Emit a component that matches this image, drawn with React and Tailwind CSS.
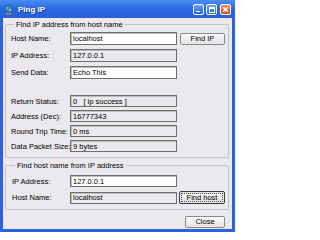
import React from "react";

const font = { fontFamily: '"Liberation Sans", Arial, sans-serif' };

function TitleButton({ kind }) {
  if (kind === "close") {
    return (
      <div className="w-[11px] h-[11px] rounded-[2px] border border-white bg-gradient-to-b from-[#f08a6a] to-[#d8431e] flex items-center justify-center">
        <svg width="7" height="7" viewBox="0 0 7 7">
          <path d="M1.2 1.2L5.8 5.8M5.8 1.2L1.2 5.8" stroke="white" strokeWidth="1.5" />
        </svg>
      </div>
    );
  }
  return (
    <div className="w-[11px] h-[11px] rounded-[2px] border border-white bg-gradient-to-b from-[#6fa0f5] to-[#2a63e0] flex items-end justify-center">
      {kind === "min" ? (
        <div className="w-[4px] h-[1.5px] bg-white mb-[2px] mr-[2px]" />
      ) : (
        <div className="w-[6px] h-[6px] border border-white border-t-2 mb-[1.5px]" />
      )}
    </div>
  );
}

function Field({ value, white, h = "h-[13px]" }) {
  return (
    <div
      className={`w-[107px] shrink-0 ${h} border border-[#6e6e6e] shadow-[inset_1px_1px_0_#bdbdbd] flex items-center pl-[2px] text-black whitespace-pre ${
        white ? "bg-white" : "bg-[#ebe9ed]"
      }`}
    >
      {value}
    </div>
  );
}

function Row({ label, children, mt, w = "w-[59px]" }) {
  return (
    <div className={`flex items-center ${mt}`}>
      <div className={`${w} shrink-0 whitespace-nowrap text-black`}>{label}</div>
      {children}
    </div>
  );
}

export default function App() {
  return (
    <div
      className="w-[235px] h-[232px] bg-[#2a63dc] flex flex-col text-[7.5px] leading-[9px]"
      style={font}
    >
      {/* title bar */}
      <div className="h-[18px] flex items-center pl-[3px] pr-[4px] bg-gradient-to-b from-[#4a8ef5] via-[#2a66df] to-[#2760d8]">
        <svg width="11" height="11" viewBox="0 0 11 11" className="mr-[4px]">
          <rect x="4.5" y="7" width="2" height="2.5" fill="#6b6b6b" />
          <rect x="2.5" y="9" width="6" height="1.5" fill="#8a8a8a" />
          <circle cx="5.5" cy="4.5" r="3.8" fill="#2f7de0" stroke="#1d4f9c" strokeWidth="0.6" />
          <path d="M3 3.2c1-.8 2-.6 2.6.2-.3 1-1.4 1.2-1.6 2.3-.6-.3-1.2-1.2-1-2.5z" fill="#6cc24a" />
          <path d="M6.4 5.2c.8-.3 1.6 0 1.9.6-.3.9-1 1.6-1.8 1.8-.2-.8-.4-1.6-.1-2.4z" fill="#f2d040" />
        </svg>
        <div className="text-white font-bold text-[8px] [text-shadow:1px_1px_0_#1a3f9a]">Ping IP</div>
        <div className="ml-auto flex gap-[2px] mt-[1px]">
          <TitleButton kind="min" />
          <TitleButton kind="max" />
          <div className="ml-[1px]">
            <TitleButton kind="close" />
          </div>
        </div>
      </div>

      {/* body */}
      <div className="flex-1 mx-[3px] mb-[3px] bg-[#ebe9ed] flex flex-col pt-[2px] px-[2px]">
        <fieldset className="border border-[#c6c4c8] rounded-[2px] w-[224px] pl-[5px] pr-[3px] pb-[5px]">
          <legend className="ml-[3px] px-[2px] text-black">Find IP address from host name</legend>
          <div className="flex flex-col pt-[3px]">
            <Row label="Host Name:">
              <Field value="localhost" white />
              <button className="ml-[3px] w-[45px] h-[12px] shrink-0 border border-[#8a8a8a] rounded-[2px] bg-gradient-to-b from-[#fafafa] to-[#e4e3e6] text-black leading-none">
                Find IP
              </button>
            </Row>
            <Row label="IP Address:" mt="mt-[4px]">
              <Field value="127.0.0.1" />
            </Row>
            <Row label="Send Data:" mt="mt-[4px]">
              <Field value="Echo This" white />
            </Row>
            <Row label="Return Status:" mt="mt-[16px]">
              <Field value={"0   [ ip success ]"} h="h-[12px]" />
            </Row>
            <Row label="Address (Dec):" mt="mt-[3px]">
              <Field value="16777343" h="h-[12px]" />
            </Row>
            <Row label="Round Trip Time:" mt="mt-[3px]">
              <Field value="0 ms" h="h-[12px]" />
            </Row>
            <Row label="Data Packet Size:" mt="mt-[3px]">
              <Field value="9 bytes" h="h-[12px]" />
            </Row>
          </div>
        </fieldset>

        <fieldset className="mt-[3px] border border-[#c6c4c8] rounded-[2px] w-[224px] pl-[6px] pr-[3px] pb-[5px]">
          <legend className="ml-[3px] px-[2px] text-black">Find host name from IP address</legend>
          <div className="flex flex-col pt-[5px]">
            <Row label="IP Address:" w="w-[58px]">
              <Field value="127.0.0.1" white h="h-[12px]" />
            </Row>
            <Row label="Host Name:" w="w-[58px]" mt="mt-[4px]">
              <Field value="localhost" h="h-[12px]" />
              <button className="ml-[2px] w-[46px] h-[13px] shrink-0 border border-[#3c3c3c] rounded-[2px] bg-[#e6e5e8] p-[1px] text-black leading-none">
                <div className="w-full h-full border border-dotted border-[#555] bg-gradient-to-b from-[#fafafa] to-[#dedde0] flex items-center justify-center">
                  Find host
                </div>
              </button>
            </Row>
          </div>
        </fieldset>

        <div className="flex justify-end mt-[6px] pr-[5px]">
          <button className="w-[40px] h-[12px] border border-[#8a8a8a] rounded-[2px] bg-gradient-to-b from-[#fafafa] to-[#e4e3e6] text-black leading-none">
            Close
          </button>
        </div>
      </div>
    </div>
  );
}
